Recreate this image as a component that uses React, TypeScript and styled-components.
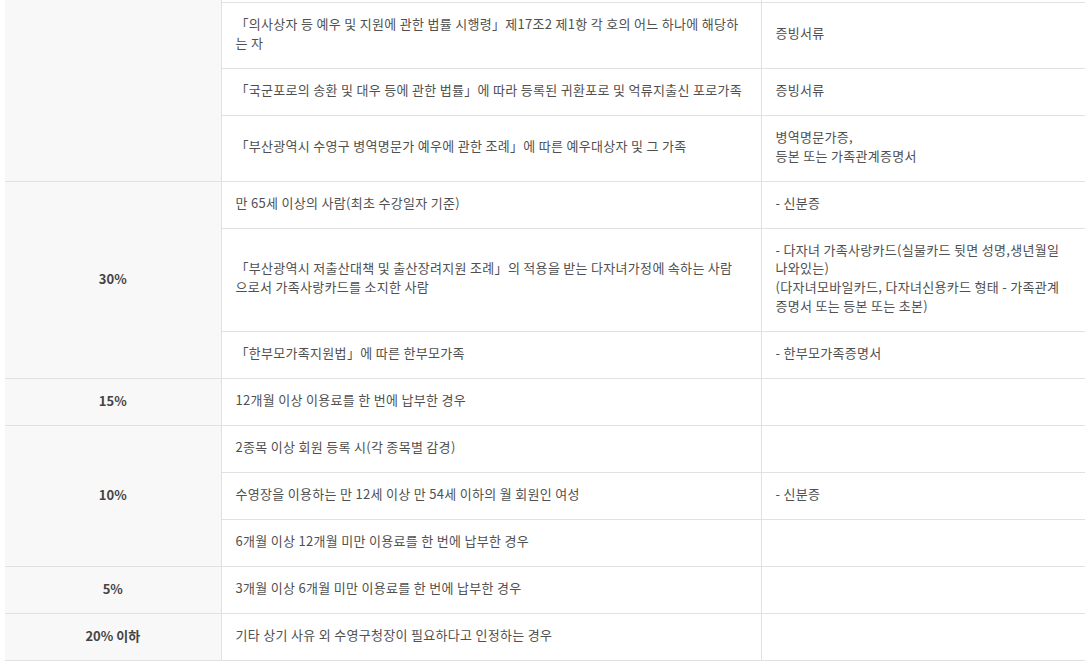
import React from "react";
import styled, { createGlobalStyle } from "styled-components";

const GlobalStyle = createGlobalStyle`
  html, body {
    margin: 0;
    padding: 0;
    background: #fff;
  }
  body {
    font-family: "Noto Sans CJK KR", "Noto Sans", sans-serif;
  }
`;

const Wrapper = styled.div`
  padding: 0 5px;
`;

const Table = styled.table`
  width: 100%;
  border-collapse: collapse;
  table-layout: fixed;
  font-size: 13px;
  line-height: 18.75px;
  letter-spacing: 0.3px;
  color: #505050;
`;

// 감면율 (왼쪽 회색 칸)
const Rate = styled.td`
  background-color: #f8f8f8;
  border-bottom: 1px solid #e1e1e1;
  text-align: center;
  vertical-align: middle;
  font-weight: 700;
  letter-spacing: 0;
  color: #444;
  padding: 0;
`;

const Cell = styled.td<{ $stub?: boolean }>`
  border-bottom: 1px solid #e1e1e1;
  border-left: 1px solid #e1e1e1;
  padding: ${(p) => (p.$stub ? "0" : "12px 14px 15.25px")};
  height: ${(p) => (p.$stub ? "2px" : "auto")};
  vertical-align: middle;
  text-align: left;
`;

type Row = { target: React.ReactNode; doc?: React.ReactNode };
type Group = { rate: string; rows: Row[]; stub?: boolean };

const groups: Group[] = [
  {
    rate: "",
    stub: true,
    rows: [
      {
        target: (
          <>
            「의사상자 등 예우 및 지원에 관한 법률 시행령」제17조2 제1항 각 호의 어느 하나에 해당하
            <br />는 자
          </>
        ),
        doc: "증빙서류",
      },
      {
        target: "「국군포로의 송환 및 대우 등에 관한 법률」에 따라 등록된 귀환포로 및 억류지출신 포로가족",
        doc: "증빙서류",
      },
      {
        target: "「부산광역시 수영구 병역명문가 예우에 관한 조례」에 따른 예우대상자 및 그 가족",
        doc: (
          <>
            병역명문가증,
            <br />
            등본 또는 가족관계증명서
          </>
        ),
      },
    ],
  },
  {
    rate: "30%",
    rows: [
      { target: "만 65세 이상의 사람(최초 수강일자 기준)", doc: "- 신분증" },
      {
        target: (
          <>
            「부산광역시 저출산대책 및 출산장려지원 조례」의 적용을 받는 다자녀가정에 속하는 사람
            <br />
            으로서 가족사랑카드를 소지한 사람
          </>
        ),
        doc: (
          <>
            - 다자녀 가족사랑카드(실물카드 뒷면 성명,생년월일
            <br />
            나와있는)
            <br />
            (다자녀모바일카드, 다자녀신용카드 형태 - 가족관계
            <br />
            증명서 또는 등본 또는 초본)
          </>
        ),
      },
      { target: "「한부모가족지원법」에 따른 한부모가족", doc: "- 한부모가족증명서" },
    ],
  },
  {
    rate: "15%",
    rows: [{ target: "12개월 이상 이용료를 한 번에 납부한 경우" }],
  },
  {
    rate: "10%",
    rows: [
      { target: "2종목 이상 회원 등록 시(각 종목별 감경)" },
      { target: "수영장을 이용하는 만 12세 이상 만 54세 이하의 월 회원인 여성", doc: "- 신분증" },
      { target: "6개월 이상 12개월 미만 이용료를 한 번에 납부한 경우" },
    ],
  },
  {
    rate: "5%",
    rows: [{ target: "3개월 이상 6개월 미만 이용료를 한 번에 납부한 경우" }],
  },
  {
    rate: "20% 이하",
    rows: [{ target: "기타 상기 사유 외 수영구청장이 필요하다고 인정하는 경우" }],
  },
];

export default function App() {
  return (
    <Wrapper>
      <GlobalStyle />
      <Table>
        <colgroup>
          <col style={{ width: 216 }} />
          <col style={{ width: 540 }} />
          <col />
        </colgroup>
        <tbody>
          {groups.map((g, gi) => {
            const span = g.rows.length + (g.stub ? 1 : 0);
            const rows = g.rows.map((r, ri) => (
              <tr key={`${gi}-${ri}`}>
                {ri === 0 && !g.stub && <Rate rowSpan={span}>{g.rate}</Rate>}
                <Cell>{r.target}</Cell>
                <Cell>{r.doc}</Cell>
              </tr>
            ));
            if (g.stub) {
              rows.unshift(
                <tr key={`${gi}-stub`}>
                  <Rate rowSpan={span}>{g.rate}</Rate>
                  <Cell $stub />
                  <Cell $stub />
                </tr>
              );
            }
            return rows;
          })}
        </tbody>
      </Table>
    </Wrapper>
  );
}
